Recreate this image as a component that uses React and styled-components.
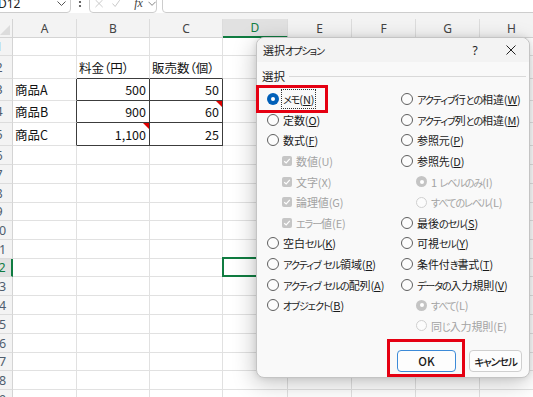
import React from "react";
import styled, { createGlobalStyle, css } from "styled-components";

const columns = [
  { id: "A", width: 64 },
  { id: "B", width: 73 },
  { id: "C", width: 73 },
  { id: "D", width: 65 },
  { id: "E", width: 64 },
  { id: "F", width: 64 },
  { id: "G", width: 64 },
  { id: "H", width: 64 },
];

const rowHeights = [18, 23, 22, 22, 23, 19, 19, 19, 18, 19, 19, 18, 19, 19, 19, 19, 18, 19, 19];

const cells = {
  2: { B: { text: "料金（円）" }, C: { text: "販売数（個）" } },
  3: { A: { text: "商品A" }, B: { text: "500", num: true }, C: { text: "50", num: true } },
  4: { A: { text: "商品B" }, B: { text: "900", num: true }, C: { text: "60", num: true, note: true } },
  5: { A: { text: "商品C" }, B: { text: "1,100", num: true, note: true }, C: { text: "25", num: true } },
};

const leftOptions = [
  { text: "メモ", key: "N", checked: true, focused: true, mark: true },
  { text: "定数", key: "O" },
  { text: "数式", key: "F" },
  { text: "数値", key: "U", box: true, sub: true, disabled: true, checked: true },
  { text: "文字", key: "X", box: true, sub: true, disabled: true, checked: true },
  { text: "論理値", key: "G", box: true, sub: true, disabled: true, checked: true },
  { text: "エラー値", key: "E", box: true, sub: true, disabled: true, checked: true },
  { text: "空白セル", key: "K" },
  { text: "アクティブ セル領域", key: "R" },
  { text: "アクティブ セルの配列", key: "A" },
  { text: "オブジェクト", key: "B" },
];

const rightOptions = [
  { text: "アクティブ行との相違", key: "W" },
  { text: "アクティブ列との相違", key: "M" },
  { text: "参照元", key: "P" },
  { text: "参照先", key: "D" },
  { text: "1 レベルのみ", key: "I", sub: true, disabled: true, checked: true },
  { text: "すべてのレベル", key: "L", sub: true, disabled: true },
  { text: "最後のセル", key: "S" },
  { text: "可視セル", key: "Y" },
  { text: "条件付き書式", key: "T" },
  { text: "データの入力規則", key: "V" },
  { text: "すべて", key: "L", sub: true, disabled: true, checked: true },
  { text: "同じ入力規則", key: "E", sub: true, disabled: true },
];

const isDarkRight = (row, col) => row >= 3 && row <= 5 && ["A", "B", "C"].includes(col);
const isDarkBottom = (row, col) => row >= 2 && row <= 5 && ["B", "C"].includes(col);

// kana in the dialog font are much narrower than kanji, so set them apart
const ja = (text) =>
  text.split(/([\u3040-\u30ff]+)/).map((part, i) =>
    /[\u3040-\u30ff]/.test(part) ? <Kana key={i}>{part}</Kana> : part
  );

const Chevron = ({ color = "#555" }) => (
  <svg width="9" height="6" viewBox="0 0 9 6">
    <path d="M0.5 0.5 L4.5 4.5 L8.5 0.5" fill="none" stroke={color} strokeWidth="1" />
  </svg>
);

const Option = ({ item }) => (
  <OptionRow $sub={item.sub}>
    {item.box ? (
      <CheckBox>
        <svg width="8" height="8" viewBox="0 0 8 8">
          <path d="M1.2 4.2 L3.2 6 L6.8 1.8" fill="none" stroke="#fff" strokeWidth="1.2" />
        </svg>
      </CheckBox>
    ) : (
      <Radio $checked={item.checked} $disabled={item.disabled} $small={item.sub} />
    )}
    <OptionLabel $disabled={item.disabled} $focused={item.focused}>
      {ja(item.text)}(<Key $disabled={item.disabled}>{item.key}</Key>)
    </OptionLabel>
    {item.mark && <Highlight style={{ left: -11, top: -4, width: 72, height: 28 }} />}
  </OptionRow>
);

const App = () => {
  return (
    <>
      <GlobalStyle />
      <Screen>
        <TopBar>
          <Strip>
            <NameBox>
              <span>D12</span>
              <Chevron />
            </NameBox>
            <Dots>
              <svg width="4" height="14" viewBox="0 0 4 14">
                <circle cx="2" cy="2" r="1.1" fill="#444" />
                <circle cx="2" cy="6" r="1.1" fill="#444" />
                <circle cx="2" cy="10" r="1.1" fill="#444" />
              </svg>
            </Dots>
            <ToolBox>
              <svg width="9" height="9" viewBox="0 0 9 9">
                <path d="M0.5 0.5 L8.5 8.5 M8.5 0.5 L0.5 8.5" stroke="#c4c4c4" strokeWidth="1" />
              </svg>
              <svg width="9" height="9" viewBox="0 0 9 9">
                <path d="M0.5 4.5 L3.5 7.8 L8.5 0.8" fill="none" stroke="#c4c4c4" strokeWidth="1" />
              </svg>
              <Fx>fx</Fx>
              <Chevron color="#777" />
            </ToolBox>
            <FormulaInput />
          </Strip>
        </TopBar>

        <Sheet>
          <Corner />
          {columns.map((c) => (
            <ColHeader key={c.id} $selected={c.id === "D"}>
              {c.id}
            </ColHeader>
          ))}
          {rowHeights.map((h, i) => {
            const row = i + 1;
            return (
              <React.Fragment key={row}>
                <RowHeader $selected={row === 12}>{row}</RowHeader>
                {columns.map((c) => {
                  const cell = (cells[row] || {})[c.id];
                  return (
                    <Cell
                      key={c.id}
                      $darkRight={isDarkRight(row, c.id)}
                      $darkBottom={isDarkBottom(row, c.id)}
                      $num={cell && cell.num}
                    >
                      {cell && cell.text}
                      {cell && cell.note && <Note />}
                      {row === 12 && c.id === "D" && <Selection />}
                    </Cell>
                  );
                })}
              </React.Fragment>
            );
          })}
        </Sheet>

        <Dialog>
          <TitleBar>
            <Title>{ja("選択オプション")}</Title>
            <TitleButton>?</TitleButton>
            <TitleButton>
              <svg width="10" height="10" viewBox="0 0 10 10">
                <path d="M0.5 0.5 L9.5 9.5 M9.5 0.5 L0.5 9.5" stroke="#222" strokeWidth="1" />
              </svg>
            </TitleButton>
          </TitleBar>
          <Body>
            <GroupHeader>
              <span>選択</span>
              <Rule />
            </GroupHeader>
            <Options>
              <Column>
                {leftOptions.map((o) => (
                  <Option key={o.text} item={o} />
                ))}
              </Column>
              <Column>
                {rightOptions.map((o) => (
                  <Option key={o.text} item={o} />
                ))}
              </Column>
            </Options>
            <ButtonRow>
              <ButtonSlot>
                <Button $primary $w={59}>OK</Button>
                <Highlight style={{ left: -10, top: -11, width: 78, height: 38 }} />
              </ButtonSlot>
              <Button $w={53}>{ja("キャンセル")}</Button>
            </ButtonRow>
          </Body>
        </Dialog>
      </Screen>
    </>
  );
};

const GlobalStyle = createGlobalStyle`
  body {
    margin: 0;
    background: #fff;
    font-family: "Noto Sans CJK JP", "Noto Sans", sans-serif;
  }
`;

const Screen = styled.div`
  position: relative;
  width: 533px;
  height: 397px;
  overflow: hidden;
  background: #f3f3f3;
`;

const TopBar = styled.div`
  height: 19px;
  background: #f3f3f3;
`;

const Strip = styled.div`
  height: 13px;
  background: #fff;
  display: flex;
  align-items: flex-start;
  overflow: hidden;
`;

const box = css`
  box-sizing: border-box;
  height: 19px;
  margin-top: -6px;
  border: 1px solid #cdcdcd;
  border-radius: 4px;
  background: #fff;
  display: flex;
  align-items: center;
`;

const NameBox = styled.div`
  ${box};
  margin-left: -20px;
  width: 91px;
  padding: 0 4px 0 17px;
  justify-content: space-between;
  font: 12px "Noto Sans", sans-serif;
  color: #222;
`;

const Dots = styled.div`
  width: 18px;
  height: 13px;
  display: flex;
  justify-content: center;
  align-items: flex-start;
  margin-top: -4px;
`;

const ToolBox = styled.div`
  ${box};
  width: 68px;
  padding-left: 5px;
  gap: 9px;
  & > svg:nth-child(2) {
    margin-right: 5px;
  }
`;

const Fx = styled.span`
  font: italic 12px "Liberation Serif", serif;
  color: #444;
  margin-right: -4px;
`;

const FormulaInput = styled.div`
  ${box};
  flex: 1;
  margin-left: 5px;
  margin-right: -10px;
`;

const Sheet = styled.div`
  display: grid;
  grid-template-columns: 25px ${columns.map((c) => `${c.width}px`).join(" ")};
  grid-template-rows: 19px ${rowHeights.map((h) => `${h}px`).join(" ")};
  margin-left: -12px;
  font-family: "Noto Sans CJK JP", sans-serif;
  font-feature-settings: "palt";
`;

const Corner = styled.div`
  position: relative;
  box-sizing: border-box;
  border-right: 1px solid #d4d4d4;
  border-bottom: 1px solid #d4d4d4;
  &::after {
    content: "";
    position: absolute;
    right: 2px;
    bottom: 2px;
    border-left: 10px solid transparent;
    border-bottom: 10px solid #dcdcdc;
  }
`;

const ColHeader = styled.div`
  box-sizing: border-box;
  display: flex;
  align-items: center;
  justify-content: center;
  font: 12px "Noto Sans", sans-serif;
  color: #444;
  border-right: 1px solid #dcdcdc;
  border-bottom: 1px solid #d4d4d4;
  ${(p) =>
    p.$selected &&
    css`
      background: #e1e1e1;
      color: #107c41;
      border-bottom: 2px solid #107c41;
    `}
`;

const RowHeader = styled.div`
  box-sizing: border-box;
  display: flex;
  align-items: center;
  justify-content: center;
  padding-right: 2px;
  font: 12.5px "Noto Sans", sans-serif;
  color: #4f5e6e;
  border-bottom: 1px solid #dcdcdc;
  border-right: 1px solid #d4d4d4;
  ${(p) =>
    p.$selected &&
    css`
      background: #e1e1e1;
      color: #107c41;
      border-right: 2px solid #107c41;
    `}
`;

const Cell = styled.div`
  position: relative;
  box-sizing: border-box;
  background: #fff;
  display: flex;
  align-items: center;
  justify-content: ${(p) => (p.$num ? "flex-end" : "flex-start")};
  padding: 0 3px 0 2px;
  font-size: 12.5px;
  color: #111;
  white-space: nowrap;
  border-right: 1px solid ${(p) => (p.$darkRight ? "#3c3c3c" : "#e1e1e1")};
  border-bottom: 1px solid ${(p) => (p.$darkBottom ? "#3c3c3c" : "#e1e1e1")};
`;

const Note = styled.span`
  position: absolute;
  top: 0;
  right: 0;
  border-left: 6px solid transparent;
  border-top: 6px solid #e00000;
`;

const Selection = styled.span`
  position: absolute;
  top: -2px;
  left: -1px;
  right: -1px;
  bottom: -1px;
  border: 2px solid #107c41;
`;

const Dialog = styled.div`
  position: absolute;
  left: 256px;
  top: 37px;
  width: 274px;
  height: 341px;
  box-sizing: border-box;
  background: #f9f9f9;
  border: 1px solid #c4c4c4;
  border-radius: 8px;
  box-shadow: -2px 6px 22px rgba(0, 0, 0, 0.22), 0 0 6px rgba(0, 0, 0, 0.1);
  display: flex;
  flex-direction: column;
  font-family: "Noto Sans CJK JP", sans-serif;
  font-feature-settings: "palt";
  color: #1a1a1a;
`;

const Kana = styled.span`
  font-size: 0.92em;
  letter-spacing: -1.1px;
`;

const TitleBar = styled.div`
  height: 24px;
  display: flex;
  align-items: center;
  padding-left: 6px;
  background: #f3f3f3;
  border-radius: 8px 8px 0 0;
`;

const Title = styled.span`
  flex: 1;
  font-size: 11px;
`;

const TitleButton = styled.span`
  width: 36px;
  display: flex;
  justify-content: center;
  font: 12px "Noto Sans", sans-serif;
  color: #222;
`;

const Body = styled.div`
  flex: 1;
  display: flex;
  flex-direction: column;
  padding: 7px 7px 5px 5px;
`;

const GroupHeader = styled.div`
  display: flex;
  align-items: center;
  gap: 4px;
  height: 14px;
  margin-right: -4px;
  font-size: 11.5px;
`;

const Rule = styled.span`
  flex: 1;
  height: 1px;
  background: #d9d9d9;
`;

const Options = styled.div`
  display: grid;
  grid-template-columns: 134px 1fr;
  padding-left: 5px;
  margin-top: 6px;
`;

const Column = styled.div`
  display: flex;
  flex-direction: column;
`;

const OptionRow = styled.div`
  position: relative;
  height: 20.6px;
  display: flex;
  align-items: center;
  gap: 4px;
  padding-left: ${(p) => (p.$sub ? 15 : 0)}px;
`;

const Radio = styled.span`
  box-sizing: border-box;
  flex: none;
  width: ${(p) => (p.$small ? 11 : 12)}px;
  height: ${(p) => (p.$small ? 11 : 12)}px;
  border-radius: 50%;
  display: flex;
  align-items: center;
  justify-content: center;
  ${(p) =>
    p.$checked
      ? css`
          background: ${p.$disabled ? "#c4c4c4" : "#005fb8"};
          &::after {
            content: "";
            width: 4px;
            height: 4px;
            border-radius: 50%;
            background: #fff;
          }
        `
      : css`
          border: 1px solid ${p.$disabled ? "#d0d0d0" : "#5f5f5f"};
          background: #fcfcfc;
        `}
`;

const CheckBox = styled.span`
  flex: none;
  width: 10px;
  height: 10px;
  border-radius: 2px;
  background: #c6c6c6;
  display: flex;
  align-items: center;
  justify-content: center;
`;

const OptionLabel = styled.span`
  font-size: 11px;
  letter-spacing: -0.1px;
  white-space: nowrap;
  color: ${(p) => (p.$disabled ? "#a3a3a3" : "#1a1a1a")};
  ${(p) =>
    p.$focused &&
    css`
      outline: 1px dotted #333;
      outline-offset: 1px;
    `}
`;

const Key = styled.span`
  text-decoration: ${(p) => (p.$disabled ? "none" : "underline")};
`;

const Highlight = styled.span`
  position: absolute;
  box-sizing: border-box;
  border: 3px solid #e50012;
  pointer-events: none;
`;

const ButtonRow = styled.div`
  margin-top: auto;
  display: flex;
  justify-content: flex-end;
  gap: 13px;
`;

const ButtonSlot = styled.div`
  position: relative;
  display: flex;
`;

const Button = styled.button`
  box-sizing: border-box;
  width: ${(p) => p.$w}px;
  height: 22px;
  padding: 0;
  border: 1px solid ${(p) => (p.$primary ? "#3c8ad8" : "#cfcfcf")};
  border-radius: 4px;
  background: #fdfdfd;
  font: 500 11.5px "Noto Sans CJK JP", sans-serif;
  font-feature-settings: "palt";
  color: #1a1a1a;
`;

export default App;
